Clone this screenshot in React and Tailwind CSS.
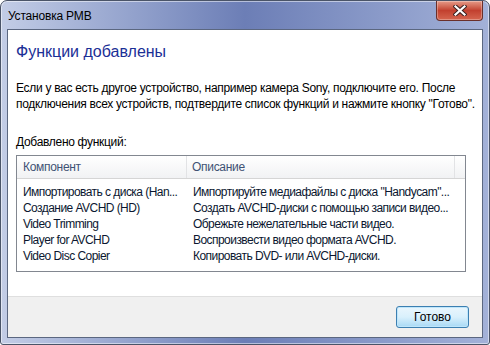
import React from 'react';

const rows = [
  ['Импортировать с диска (Han...', 'Импортируйте медиафайлы с диска "Handycam"...'],
  ['Создание AVCHD (HD)', 'Создать AVCHD-диски с помощью записи видео...'],
  ['Video Trimming', 'Обрежьте нежелательные части видео.'],
  ['Player for AVCHD', 'Воспроизвести видео формата AVCHD.'],
  ['Video Disc Copier', 'Копировать DVD- или AVCHD-диски.'],
];

function CloseButton() {
  return (
    <div className="w-[47px] h-[20px] rounded-b-[4px] border border-t-0 border-[#6a2f2a] bg-gradient-to-b from-[#e59a88] via-[#c2402f] to-[#d5654f] flex items-center justify-center shadow-[inset_0_0_0_1px_rgba(255,255,255,0.3)]">
      <svg width="14" height="11" viewBox="0 0 14 11">
        <path d="M2.5 1.5 L11.5 9.5 M11.5 1.5 L2.5 9.5" stroke="#3a2020" strokeWidth="4.2" strokeLinecap="square" />
        <path d="M2.5 1.5 L11.5 9.5 M11.5 1.5 L2.5 9.5" stroke="#ffffff" strokeWidth="2.2" strokeLinecap="square" />
      </svg>
    </div>
  );
}

export default function App() {
  return (
    <div className="w-[490px] h-[345px] bg-white" style={{ fontFamily: '"Liberation Sans", Arial, sans-serif' }}>
      <div className="w-[490px] h-[345px] rounded-t-[7px] rounded-b-[3px] border border-[#4a5468] bg-gradient-to-r from-[#c3cde6] via-[#6c7eb6] to-[#a3b1d8] flex flex-col shadow-[inset_0_0_0_1px_rgba(255,255,255,0.5)]">
        {/* title bar */}
        <div className="h-[28px] flex items-start justify-between pl-[7px] pr-[6px]">
          <span className="text-[12px] text-black mt-[6px] tracking-[-0.2px]">Установка PMB</span>
          <CloseButton />
        </div>

        {/* client area */}
        <div className="mx-[6px] h-[309px] border border-[#5b6780] flex flex-col bg-white">
          <div className="flex-1 px-[8px] pt-[12px] text-[12px] text-black">
            <div className="text-[16px] leading-[20px] text-[#1b2f96]">Функции добавлены</div>
            <p className="mt-[18px] leading-[16px] tracking-[-0.3px] whitespace-nowrap">
              Если у вас есть другое устройство, например камера Sony, подключите его. После<br />
              подключения всех устройств, подтвердите список функций и нажмите кнопку "Готово".
            </p>
            <div className="mt-[22px] leading-[16px] tracking-[-0.3px]">Добавлено функций:</div>
            <div className="mt-[5px] w-[450px] h-[117px] border border-[#828790] bg-white overflow-hidden">
              <div className="h-[23px] flex bg-gradient-to-b from-white to-[#f1f2f4] border-b border-[#d5d5d5] text-[#3f5274] tracking-[-0.3px]">
                <div className="w-[170px] shrink-0 pl-[6px] flex items-center border-r border-[#e2e3e5]">Компонент</div>
                <div className="w-[268px] shrink-0 pl-[5px] flex items-center border-r border-[#e2e3e5]">Описание</div>
                <div className="flex-1" />
              </div>
              <div className="pt-[5px]">
                {rows.map(([a, b]) => (
                  <div key={a} className="h-[16px] flex items-center text-[#0b1730] tracking-[-0.55px]">
                    <div className="w-[170px] shrink-0 pl-[6px] whitespace-nowrap overflow-hidden">{a}</div>
                    <div className="pl-[6px] whitespace-nowrap">{b}</div>
                  </div>
                ))}
              </div>
            </div>
          </div>
          <div className="h-[41px] border-t border-[#dfdfdf] bg-[#f0f0f0] flex items-center justify-end pr-[13px]">
            <button className="w-[73px] h-[22px] rounded-[3px] border border-[#3c7fb1] bg-gradient-to-b from-[#eaf6fd] via-[#d9f0fc] to-[#a7d9f5] text-[12px] text-black shadow-[inset_0_0_0_1px_#bfe6fb]">
              Готово
            </button>
          </div>
        </div>
        <div className="flex-1" />
      </div>
    </div>
  );
}
